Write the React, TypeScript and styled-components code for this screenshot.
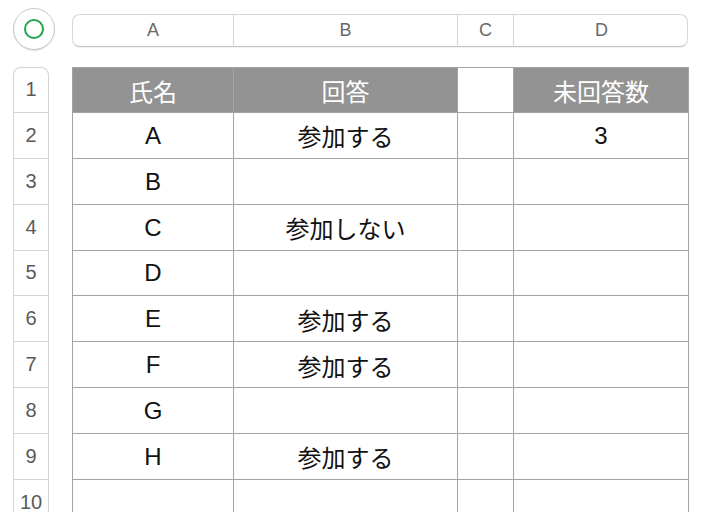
import React from 'react';
import styled, { createGlobalStyle } from 'styled-components';

const GlobalStyle = createGlobalStyle`
  html, body {
    margin: 0;
    padding: 0;
    background: #ffffff;
    overflow: hidden;
  }
  body {
    font-family: "Liberation Sans", "Noto Sans CJK JP", sans-serif;
  }
`;

const COLS = [161, 224, 56, 175];
const ROW_H = 45.875;

const rows: { no: number; name: string; answer: string; pending?: string }[] = [
  { no: 2, name: 'A', answer: '参加する', pending: '3' },
  { no: 3, name: 'B', answer: '' },
  { no: 4, name: 'C', answer: '参加しない' },
  { no: 5, name: 'D', answer: '' },
  { no: 6, name: 'E', answer: '参加する' },
  { no: 7, name: 'F', answer: '参加する' },
  { no: 8, name: 'G', answer: '' },
  { no: 9, name: 'H', answer: '参加する' },
  { no: 10, name: '', answer: '' },
];

const Sheet = styled.div`
  display: grid;
  grid-template-columns: 59px ${COLS.reduce((a, b) => a + b, 0)}px;
  grid-template-rows: 59px auto;
  padding: 8px 0 0 13px;
  width: 701px;
  height: 512px;
  box-sizing: border-box;
`;

const Corner = styled.div`
  display: flex;
  align-items: flex-start;
`;

const SelectAll = styled.div`
  width: 42px;
  height: 42px;
  box-sizing: border-box;
  border-radius: 50%;
  border: 1px solid #c8c8c8;
  box-shadow: 0 1px 1px rgba(0, 0, 0, 0.12);
  display: flex;
  align-items: center;
  justify-content: center;
  background: #fff;
`;

const Ring = styled.div`
  width: 20px;
  height: 20px;
  box-sizing: border-box;
  border-radius: 50%;
  border: 2px solid #1ea54c;
`;

const ColumnBar = styled.div`
  display: grid;
  grid-template-columns: ${COLS.map((c) => `${c}px`).join(' ')};
  height: 33px;
  margin-top: 6px;
  box-sizing: border-box;
  border: 1px solid #d6d6d6;
  border-bottom-color: #c4c4c4;
  border-radius: 8px;
  box-shadow: 0 1px 1px rgba(0, 0, 0, 0.06);
  overflow: hidden;
`;

const ColumnLabel = styled.div<{ $last?: boolean }>`
  display: flex;
  align-items: center;
  justify-content: center;
  font-size: 18px;
  color: #6a6a6a;
  border-right: ${(p) => (p.$last ? 'none' : '1px solid #d6d6d6')};
`;

const RowHeads = styled.div`
  width: 36px;
  box-sizing: border-box;
  border: 1px solid #d4d4d4;
  border-bottom: none;
  border-radius: 8px 8px 0 0;
  display: flex;
  flex-direction: column;
`;

const RowHead = styled.div<{ $first?: boolean }>`
  height: ${(p) => (p.$first ? ROW_H - 1 : ROW_H)}px;
  flex-shrink: 0;
  box-sizing: border-box;
  border-bottom: 1px solid #d4d4d4;
  display: flex;
  align-items: center;
  justify-content: center;
  font-size: 20px;
  color: #5a5a5a;
`;

const Table = styled.div`
  display: grid;
  grid-template-columns: ${COLS.map((c) => `${c}px`).join(' ')};
  grid-auto-rows: ${ROW_H}px;
  align-content: start;
  border-left: 1px solid #a4a4a4;
`;

const Cell = styled.div<{ $head?: boolean; $blank?: boolean }>`
  box-sizing: border-box;
  display: flex;
  align-items: center;
  justify-content: center;
  border-right: 1px solid #a4a4a4;
  border-bottom: 1px solid #a4a4a4;
  border-top: ${(p) => (p.$head ? '1px solid #a4a4a4' : 'none')};
  background: ${(p) => (p.$head && !p.$blank ? '#939393' : '#fff')};
  color: ${(p) => (p.$head ? '#ffffff' : '#111')};
  font-size: 24px;
  font-family: "Liberation Sans", "Noto Sans CJK JP", sans-serif;
  padding-top: 1px;
`;

export default function App() {
  return (
    <>
      <GlobalStyle />
      <Sheet>
        <Corner>
          <SelectAll>
            <Ring />
          </SelectAll>
        </Corner>
        <ColumnBar>
          {['A', 'B', 'C', 'D'].map((c, i) => (
            <ColumnLabel key={c} $last={i === 3}>
              {c}
            </ColumnLabel>
          ))}
        </ColumnBar>
        <RowHeads>
          <RowHead $first>1</RowHead>
          {rows.map((r) => (
            <RowHead key={r.no}>{r.no}</RowHead>
          ))}
        </RowHeads>
        <Table>
          <Cell $head>氏名</Cell>
          <Cell $head>回答</Cell>
          <Cell $head $blank />
          <Cell $head>未回答数</Cell>
          {rows.map((r) => (
            <React.Fragment key={r.no}>
              <Cell>{r.name}</Cell>
              <Cell>{r.answer}</Cell>
              <Cell />
              <Cell>{r.pending ?? ''}</Cell>
            </React.Fragment>
          ))}
        </Table>
      </Sheet>
    </>
  );
}
